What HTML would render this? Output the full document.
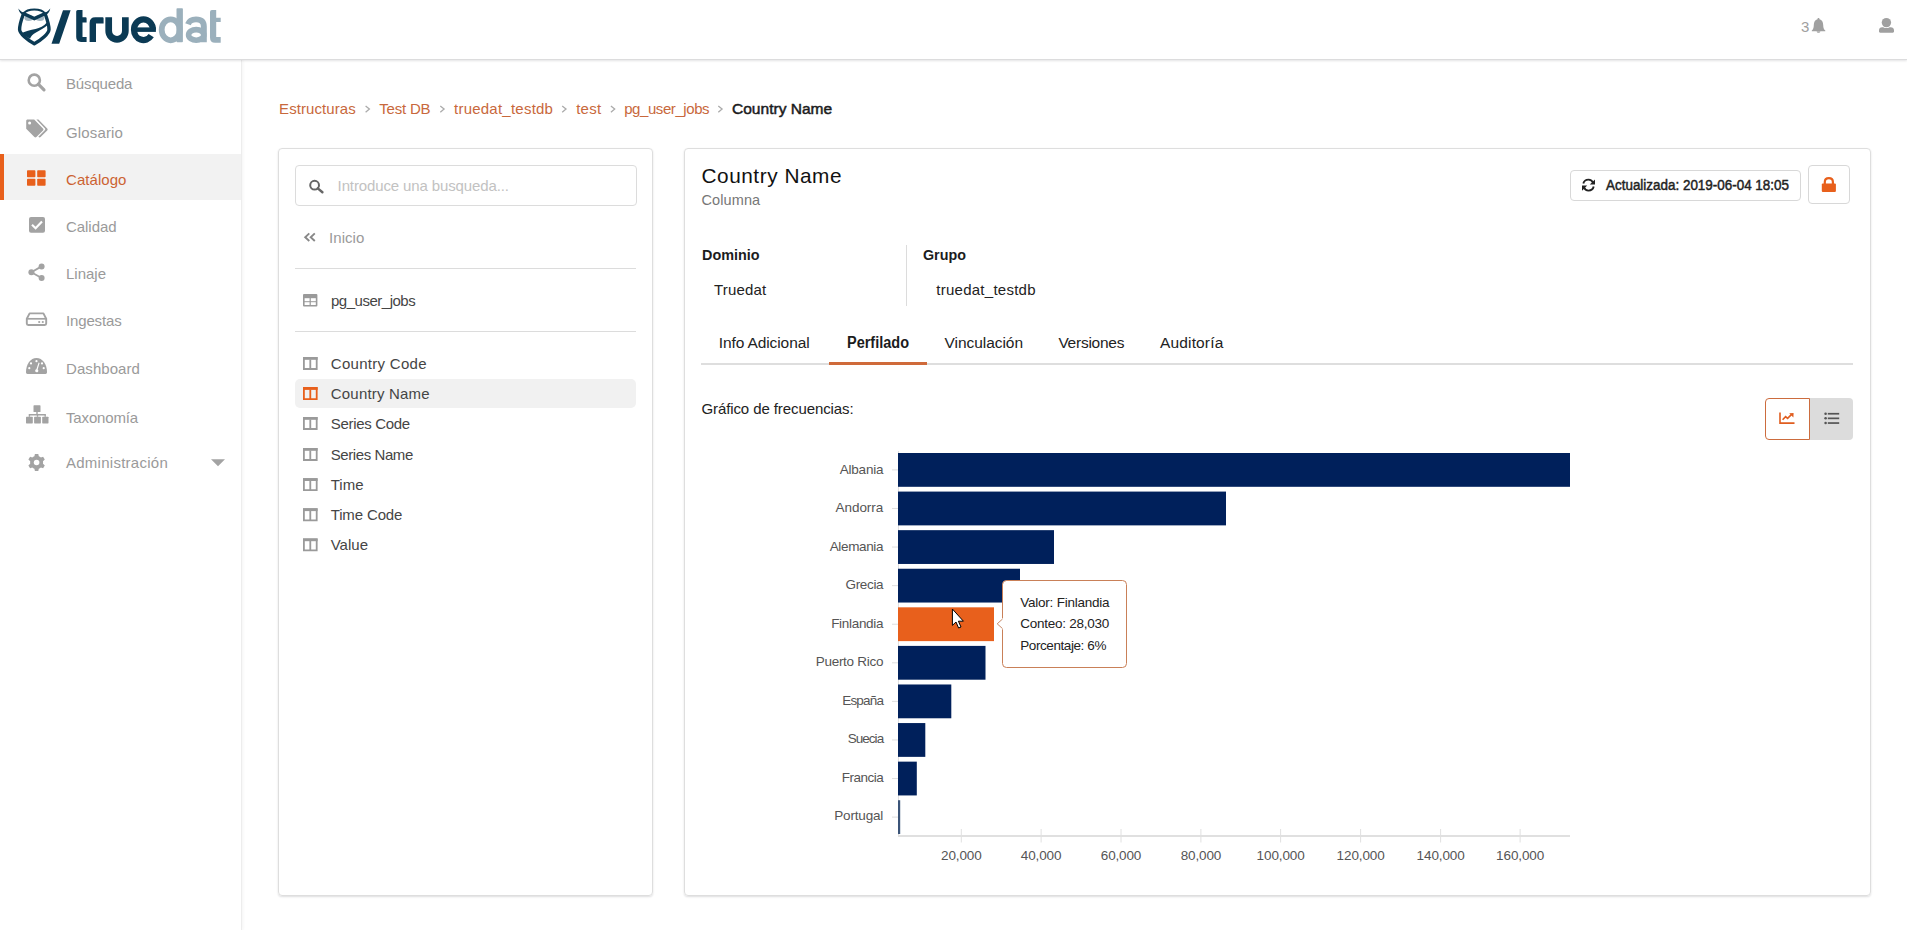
<!DOCTYPE html>
<html><head><meta charset="utf-8">
<style>
html,body{margin:0;padding:0;width:1907px;height:930px;overflow:hidden;background:#fff;font-family:"Liberation Sans",sans-serif;}
.t{position:absolute;white-space:nowrap;line-height:1;}
.a{position:absolute;}
svg.a{overflow:visible;}
</style></head><body>
<!-- sidebar -->
<div class="a" style="left:0;top:60px;width:241px;height:870px;background:#fff;border-right:1px solid #ededed;box-shadow:1px 0 3px rgba(34,36,38,.05);"></div>
<div class="a" style="left:0;top:154px;width:241px;height:46px;background:#f2f2f2;"></div>
<div class="a" style="left:0;top:154px;width:4px;height:46px;background:#e8601c;"></div>
<!-- header -->
<div class="a" style="left:0;top:0;width:1907px;height:59px;background:#fff;border-bottom:1px solid #dcdcdd;box-shadow:0 1px 2px rgba(34,36,38,.12);"></div>
<!-- panels -->
<div class="a" style="left:278px;top:148px;width:373px;height:746px;border:1px solid #dedede;border-radius:4px;box-shadow:0 1px 2px rgba(34,36,38,.15);"></div>
<div class="a" style="left:684px;top:148px;width:1185px;height:746px;border:1px solid #dedede;border-radius:4px;box-shadow:0 1px 2px rgba(34,36,38,.15);"></div>
<!-- input -->
<div class="a" style="left:295px;top:165px;width:340px;height:39px;border:1px solid #dcdcdc;border-radius:4px;"></div>
<!-- dividers -->
<div class="a" style="left:295px;top:268px;width:341px;height:1px;background:#dcdcdc;"></div>
<div class="a" style="left:295px;top:331px;width:341px;height:1px;background:#dcdcdc;"></div>
<!-- active column -->
<div class="a" style="left:295px;top:379px;width:341px;height:29px;background:#f1f1f1;border-radius:5px;"></div>
<!-- buttons -->
<div class="a" style="left:1570px;top:170px;width:229px;height:29px;border:1px solid #d8d8d8;border-radius:4px;"></div>
<div class="a" style="left:1808px;top:165px;width:40px;height:37px;border:1px solid #d8d8d8;border-radius:4px;"></div>
<!-- meta divider -->
<div class="a" style="left:906px;top:245px;width:1px;height:61px;background:#dcdcdc;"></div>
<!-- tabs -->
<div class="a" style="left:701px;top:363px;width:1152px;height:2px;background:#dedede;"></div>
<div class="a" style="left:829px;top:362px;width:98px;height:3px;background:#cf6a3a;"></div>
<!-- toggle -->
<div class="a" style="left:1809px;top:398px;width:44px;height:42px;background:#dcdcdc;border-radius:0 4px 4px 0;"></div>
<div class="a" style="left:1765px;top:398px;width:43px;height:40px;border:1px solid #cc6c3e;border-radius:4px 0 0 4px;background:#fff;"></div>

<!-- ICONS & CHART -->
<svg class="a" style="left:0;top:0" width="1907" height="930" viewBox="0 0 1907 930">
  <!-- logo owl -->
  <g transform="translate(14,4)" fill="#0b3a54">
    <path d="M9.4 10 C7.6 15,5.6 20,5.6 25.5 C5.6 29.5,13.5 36,20.3 39.8 C27.1 36,35 29.5,35 25.5 C35 20,33 15,31.2 10" fill="none" stroke="#0b3a54" stroke-width="3.4" stroke-linejoin="round"/>
    <path d="M9.6 9.6 C13.5 4.2,27.1 4.2,31 9.6" fill="none" stroke="#0b3a54" stroke-width="2"/>
    <path d="M4.3 4.5 C6.3 7.4,8.8 8.6,11.6 8.8 L10 11.8 C7 10.4,5 8,4.3 4.5Z"/>
    <path d="M36.3 4.5 C34.3 7.4,31.8 8.6,29 8.8 L30.6 11.8 C33.6 10.4,35.6 8,36.3 4.5Z"/>
    <ellipse cx="14.7" cy="14" rx="4.3" ry="3" fill="#a4b7c2"/>
    <ellipse cx="26" cy="14" rx="4.3" ry="3" fill="#a4b7c2"/>
    <path d="M8.8 9.2 L20.3 14.6 L31.8 9.2" fill="none" stroke="#0b3a54" stroke-width="3.4" stroke-linejoin="miter"/>
    <path d="M6.5 29.4 C11.5 27.2,16.5 26,21.5 25 C26 24,29.8 22.2,32.8 18.6 L33.4 21.2 C30.2 24,26.2 26,22 28.4 C19 30.2,16.8 32,16 34.8 L12 32.6 C10 31.6,8 30.6,6.5 29.4Z"/>
  </g>
  <path d="M63 10.2 L70.6 10.2 L59.2 43.8 L51.5 43.8Z" fill="#0b3a54"/>
  <g fill="#0b3a54">
    <path d="M76.2 11.5 Q76.2 9.9 77.8 9.9 H82.5 V17.3 H85.6 Q86.6 17.3 86.6 18.3 V22.5 H82.5 V37.1 H86.6 V41.9 H81 Q76.2 41.9 76.2 37 Z"/>
    <path d="M89.6 41.9 V23 Q89.6 17.3 95.3 17.3 H102.6 Q103.6 17.3 103.6 18.3 V23.4 H96 V41.9 Z"/>
  </g>
  <path d="M108.7 17.3 V31.1 A8.32 8.32 0 0 0 125.35 31.1 V17.3" fill="none" stroke="#0b3a54" stroke-width="6.7"/>
  <path d="M152.9 29.65 A9.45 10.35 0 0 0 134 29.65 A9.45 10.35 0 0 0 151.2 35.6" fill="none" stroke="#0b3a54" stroke-width="6.2"/>
  <rect x="134" y="27.4" width="21.9" height="4.5" fill="#0b3a54"/>
  <g fill="#9bb0bc">
    <rect x="176.5" y="8.3" width="6.4" height="34" rx="0.8"/>
    <path d="M210 12 Q210 10.1 211.9 10.1 H216.2 V17.7 H220.7 V22 H216.2 V37.1 H220.7 V42.8 H215 Q210 42.8 210 37.5 Z"/>
  </g>
  <ellipse cx="170.7" cy="29.8" rx="9" ry="10.5" fill="none" stroke="#9bb0bc" stroke-width="5.8"/>
  <path d="M188 24.3 C189.3 20.4,192.3 19.4,196 19.4 C201.3 19.4,203.85 22,203.85 26.5 V42.3" fill="none" stroke="#9bb0bc" stroke-width="5.9"/>
  <ellipse cx="196.2" cy="34.9" rx="7.6" ry="5.3" fill="none" stroke="#9bb0bc" stroke-width="5.6"/>

  <!-- bell -->
  <path d="M1818.5 18 C1819.3 18,1819.6 18.6,1819.5 19.3 C1822 20,1823.2 22,1823.2 25 C1823.2 28,1824 29.5,1825.3 30.5 L1825.3 31.2 L1811.8 31.2 L1811.8 30.5 C1813 29.5,1813.8 28,1813.8 25 C1813.8 22,1815 20,1817.5 19.3 C1817.4 18.6,1817.7 18,1818.5 18Z M1816.6 31.5 C1816.8 32.4,1817.6 32.8,1818.5 32.8 C1819.4 32.8,1820.2 32.4,1820.4 31.5Z" fill="#a0a0a0"/>
  <!-- user -->
  <circle cx="1886.4" cy="22.6" r="4.7" fill="#a0a0a0"/>
  <path d="M1879 30.2 C1879 28.3,1880.3 27.2,1882.2 27.2 L1883.2 27.2 C1884.2 27.9,1885.3 28.1,1886.4 28.1 C1887.5 28.1,1888.6 27.9,1889.6 27.2 L1890.7 27.2 C1892.6 27.2,1894 28.3,1894 30.2 L1894 31.6 C1894 32.3,1893.5 32.8,1892.8 32.8 L1880.2 32.8 C1879.5 32.8,1879 32.3,1879 31.6Z" fill="#a0a0a0"/>

  <!-- sidebar icons -->
  <g fill="#a3a3a3">
    <!-- search -->
    <circle cx="34.3" cy="80.2" r="5.6" fill="none" stroke="#a3a3a3" stroke-width="2.6"/>
    <path d="M38.3 84.2 L44 89.8" stroke="#a3a3a3" stroke-width="3.2" stroke-linecap="round"/>
    <!-- tags -->
    <path d="M26.2 121 C26.2 120.2,26.8 119.6,27.6 119.6 L34.2 119.6 L43 128.4 C43.6 129,43.6 129.8,43 130.4 L36.4 137 C35.8 137.6,35 137.6,34.4 137 L26.2 128.8Z" />
    <circle cx="29.6" cy="123" r="1.5" fill="#fff"/>
    <path d="M36.4 119.6 L38.4 119.6 L47.2 128.4 C47.8 129,47.8 129.8,47.2 130.4 L40.6 137 C40 137.6,39.2 137.6,38.6 137 L38.3 136.7 L45 130 C45.4 129.6,45.4 129,45 128.6Z"/>
    <!-- th-large -->
    <g fill="#e8601c">
      <rect x="27" y="170.3" width="8.4" height="6.9" rx="0.8"/>
      <rect x="37.2" y="170.3" width="8.4" height="6.9" rx="0.8"/>
      <rect x="27" y="178.8" width="8.4" height="6.9" rx="0.8"/>
      <rect x="37.2" y="178.8" width="8.4" height="6.9" rx="0.8"/>
    </g>
    <!-- check-square -->
    <rect x="29" y="217" width="16" height="15.7" rx="2"/>
    <path d="M32 224.8 L35.6 228.2 L42 221.6" fill="none" stroke="#fff" stroke-width="2.2"/>
    <!-- share-alt -->
    <circle cx="41.6" cy="266.4" r="3"/>
    <circle cx="31.4" cy="272.2" r="3"/>
    <circle cx="41.6" cy="278" r="3"/>
    <path d="M41.6 266.4 L31.4 272.2 L41.6 278" fill="none" stroke="#a3a3a3" stroke-width="1.8"/>
    <!-- hdd -->
    <path d="M29.6 313.4 L43.4 313.4 L46.2 318.8 L46.2 323.6 C46.2 324.4,45.6 325,44.8 325 L28.2 325 C27.4 325,26.8 324.4,26.8 323.6 L26.8 318.8Z" fill="none" stroke="#a3a3a3" stroke-width="1.9" stroke-linejoin="round"/>
    <path d="M26.8 318.8 L46.2 318.8" stroke="#a3a3a3" stroke-width="1.7"/>
    <circle cx="42.8" cy="322" r="1.1"/><circle cx="39.2" cy="322" r="1.1"/>
    <!-- tachometer -->
    <path d="M26 372.2 C26 364.2,30.5 358,36.5 358 C42.5 358,47 364.2,47 372.2 C47 373.2,46.4 373.9,45.5 373.9 L27.5 373.9 C26.6 373.9,26 373.2,26 372.2Z"/>
    <g fill="#fff">
      <circle cx="29.3" cy="368.2" r="1.1"/><circle cx="31" cy="363.4" r="1.1"/><circle cx="36.5" cy="361.2" r="1.1"/><circle cx="42" cy="363.4" r="1.1"/><circle cx="43.7" cy="368.2" r="1.1"/>
      <path d="M38.6 362.6 L39.6 362.9 L37.6 369.5 C38.4 370,38.6 371,38 371.8 C37.3 372.6,35.8 372.5,35.3 371.5 C34.9 370.6,35.4 369.6,36.4 369.3Z"/>
    </g>
    <!-- sitemap -->
    <rect x="33.5" y="405.3" width="7" height="6.7" rx="0.6"/>
    <path d="M37 412 L37 414.7 M29.4 416.8 L29.4 414.7 L45.2 414.7 L45.2 416.8 M37.5 414.7 L37.5 416.8" fill="none" stroke="#a3a3a3" stroke-width="1.4"/>
    <rect x="26" y="416.7" width="6.8" height="6.7" rx="0.6"/>
    <rect x="34.1" y="416.7" width="6.8" height="6.7" rx="0.6"/>
    <rect x="42.2" y="416.7" width="6.3" height="6.7" rx="0.6"/>
    <!-- cog -->
    <g transform="translate(36.6,462.5)">
      <path d="M-1.7 -8.5 L1.7 -8.5 L2.2 -6.2 C3 -5.9,3.7 -5.5,4.3 -5 L6.5 -5.8 L8.2 -2.9 L6.4 -1.3 C6.5 -0.4,6.5 0.4,6.4 1.3 L8.2 2.9 L6.5 5.8 L4.3 5 C3.7 5.5,3 5.9,2.2 6.2 L1.7 8.5 L-1.7 8.5 L-2.2 6.2 C-3 5.9,-3.7 5.5,-4.3 5 L-6.5 5.8 L-8.2 2.9 L-6.4 1.3 C-6.5 0.4,-6.5 -0.4,-6.4 -1.3 L-8.2 -2.9 L-6.5 -5.8 L-4.3 -5 C-3.7 -5.5,-3 -5.9,-2.2 -6.2Z"/>
      <circle r="2.8" fill="#fff"/>
    </g>
    <!-- caret -->
    <path d="M211 459.2 L225 459.2 L218 466.3Z"/>
  </g>

  <!-- breadcrumb chevrons -->
  <g fill="none" stroke="#ababab" stroke-width="1.3">
    <path d="M365.6 105.9 L369.4 109.1 L365.6 112.3"/>
    <path d="M440.3 105.9 L444.1 109.1 L440.3 112.3"/>
    <path d="M562.2 105.9 L566 109.1 L562.2 112.3"/>
    <path d="M610.9 105.9 L614.7 109.1 L610.9 112.3"/>
    <path d="M718.3 105.9 L722.1 109.1 L718.3 112.3"/>
  </g>

  <!-- input search icon -->
  <circle cx="314.6" cy="185.2" r="4.4" fill="none" stroke="#666" stroke-width="2"/>
  <path d="M317.8 188.4 L322.4 192.2" stroke="#666" stroke-width="2.5" stroke-linecap="round"/>
  <!-- angle double left -->
  <path d="M309.3 233.4 L305.2 237.2 L309.3 241 M314.8 233.4 L310.7 237.2 L314.8 241" fill="none" stroke="#888" stroke-width="1.9"/>
  <!-- table icon -->
  <g>
    <rect x="303" y="294" width="14.4" height="12.4" rx="1" fill="#9a9a9a"/>
    <rect x="304.6" y="298.2" width="5" height="3" fill="#fff"/>
    <rect x="310.8" y="298.2" width="5" height="3" fill="#fff"/>
    <rect x="304.6" y="302.2" width="5" height="2.8" fill="#fff"/>
    <rect x="310.8" y="302.2" width="5" height="2.8" fill="#fff"/>
  </g>
  <!-- column icons -->
  <g id="colicons"></g>
  <g transform="translate(303,357)"><path d="M0.9 0.9 H13.7 V12 H0.9Z M7.3 2.5 V12" fill="none" stroke="#9a9a9a" stroke-width="1.8"/><rect x="0" y="0" width="14.6" height="2.8" fill="#9a9a9a"/></g>
<g transform="translate(303,387.1)"><path d="M0.9 0.9 H13.7 V12 H0.9Z M7.3 2.5 V12" fill="none" stroke="#e8601c" stroke-width="1.8"/><rect x="0" y="0" width="14.6" height="2.8" fill="#e8601c"/></g>
<g transform="translate(303,417)"><path d="M0.9 0.9 H13.7 V12 H0.9Z M7.3 2.5 V12" fill="none" stroke="#9a9a9a" stroke-width="1.8"/><rect x="0" y="0" width="14.6" height="2.8" fill="#9a9a9a"/></g>
<g transform="translate(303,448)"><path d="M0.9 0.9 H13.7 V12 H0.9Z M7.3 2.5 V12" fill="none" stroke="#9a9a9a" stroke-width="1.8"/><rect x="0" y="0" width="14.6" height="2.8" fill="#9a9a9a"/></g>
<g transform="translate(303,478.2)"><path d="M0.9 0.9 H13.7 V12 H0.9Z M7.3 2.5 V12" fill="none" stroke="#9a9a9a" stroke-width="1.8"/><rect x="0" y="0" width="14.6" height="2.8" fill="#9a9a9a"/></g>
<g transform="translate(303,508.3)"><path d="M0.9 0.9 H13.7 V12 H0.9Z M7.3 2.5 V12" fill="none" stroke="#9a9a9a" stroke-width="1.8"/><rect x="0" y="0" width="14.6" height="2.8" fill="#9a9a9a"/></g>
<g transform="translate(303,538.4)"><path d="M0.9 0.9 H13.7 V12 H0.9Z M7.3 2.5 V12" fill="none" stroke="#9a9a9a" stroke-width="1.8"/><rect x="0" y="0" width="14.6" height="2.8" fill="#9a9a9a"/></g>

  <!-- refresh icon -->
  <g fill="none" stroke="#222" stroke-width="1.9">
    <path d="M1593.2 183 C1592.3 180.8,1590.5 179.6,1588.5 179.6 C1586 179.6,1583.9 181.2,1583.3 183.6"/>
    <path d="M1583.8 187.2 C1584.7 189.4,1586.5 190.6,1588.5 190.6 C1591 190.6,1593.1 189,1593.7 186.6"/>
  </g>
  <path d="M1595 179.4 L1595 184.6 L1589.8 184.6Z" fill="#222"/>
  <path d="M1582 190.8 L1582 185.6 L1587.2 185.6Z" fill="#222"/>
  <!-- lock -->
  <path d="M1824.8 184 L1824.8 182 C1824.8 179.5,1826.5 178.1,1828.85 178.1 C1831.2 178.1,1832.9 179.5,1832.9 182 L1832.9 184" fill="none" stroke="#e8601c" stroke-width="2.2"/>
  <rect x="1821.8" y="183.4" width="14.1" height="8.6" rx="1" fill="#e8601c"/>

  <!-- chart icon -->
  <g fill="none" stroke="#e05d1f" stroke-width="1.6">
    <path d="M1780 412.6 L1780 423.1 L1794.5 423.1"/>
    <path d="M1782.6 419.8 L1785.6 416.6 L1787.6 418.4 L1791.6 414.4"/>
  </g>
  <path d="M1789.2 413.2 L1793.6 413 L1793.4 417.4Z" fill="#e05d1f"/>
  <!-- list icon -->
  <g fill="#555">
    <circle cx="1825.6" cy="413.7" r="1.3"/><circle cx="1825.6" cy="418.3" r="1.3"/><circle cx="1825.6" cy="423" r="1.3"/>
    <rect x="1827.8" y="412.9" width="11.4" height="1.7"/>
    <rect x="1827.8" y="417.5" width="11.4" height="1.7"/>
    <rect x="1827.8" y="422.2" width="11.4" height="1.7"/>
  </g>

  <!-- chart -->
  <g stroke="#dedede" stroke-width="1">
    <line x1="892" y1="469.90" x2="898" y2="469.90"/>
<line x1="892" y1="508.48" x2="898" y2="508.48"/>
<line x1="892" y1="547.06" x2="898" y2="547.06"/>
<line x1="892" y1="585.64" x2="898" y2="585.64"/>
<line x1="892" y1="624.22" x2="898" y2="624.22"/>
<line x1="892" y1="662.80" x2="898" y2="662.80"/>
<line x1="892" y1="701.38" x2="898" y2="701.38"/>
<line x1="892" y1="739.96" x2="898" y2="739.96"/>
<line x1="892" y1="778.54" x2="898" y2="778.54"/>
<line x1="892" y1="817.12" x2="898" y2="817.12"/>
  </g>
  <line x1="898.5" y1="451" x2="898.5" y2="836" stroke="#e0e0e0" stroke-width="1"/>
  <rect x="898" y="453.00" width="672.00" height="33.8" fill="#00205b"/>
<rect x="898" y="491.58" width="328.00" height="33.8" fill="#00205b"/>
<rect x="898" y="530.16" width="156.00" height="33.8" fill="#00205b"/>
<rect x="898" y="568.74" width="122.00" height="33.8" fill="#00205b"/>
<rect x="898" y="607.32" width="96.00" height="33.8" fill="#e8601c"/>
<rect x="898" y="645.90" width="87.50" height="33.8" fill="#00205b"/>
<rect x="898" y="684.48" width="53.30" height="33.8" fill="#00205b"/>
<rect x="898" y="723.06" width="27.30" height="33.8" fill="#00205b"/>
<rect x="898" y="761.64" width="18.80" height="33.8" fill="#00205b"/>
<rect x="898" y="800.22" width="2.20" height="33.8" fill="#3b5478"/>
  <rect x="898" y="835" width="672" height="2" fill="#e0e0e0"/>
  <g stroke="#e0e0e0" stroke-width="1">
    <line x1="961.3" y1="829" x2="961.3" y2="842.5"/>
<line x1="1041.1" y1="829" x2="1041.1" y2="842.5"/>
<line x1="1121.0" y1="829" x2="1121.0" y2="842.5"/>
<line x1="1200.9" y1="829" x2="1200.9" y2="842.5"/>
<line x1="1280.6" y1="829" x2="1280.6" y2="842.5"/>
<line x1="1360.6" y1="829" x2="1360.6" y2="842.5"/>
<line x1="1440.6" y1="829" x2="1440.6" y2="842.5"/>
<line x1="1520.1" y1="829" x2="1520.1" y2="842.5"/>
  </g>

  <!-- tooltip -->
  <rect x="1002.5" y="580.5" width="124" height="87" rx="4" fill="#fff" stroke="#c98058" stroke-width="1"/>
  <path d="M1003 618.6 L997.2 623.8 L1003 629" fill="#fff" stroke="#c98a68" stroke-width="1"/>
  <rect x="1002.5" y="618" width="1.2" height="11.6" fill="#fff"/>
  <!-- cursor -->
  <path d="M952.4 609 L952.4 625.4 L956 622 L958.6 628 L961 627 L958.4 621.2 L963.4 621.2Z" fill="#fff" stroke="#000" stroke-width="1" stroke-linejoin="round"/>
</svg>
<div class="t" style="left:66.00px;top:76.30px;font-size:15px;letter-spacing:-0.157px;color:#9a9a9a;">Búsqueda</div>
<div class="t" style="left:66.00px;top:125.10px;font-size:15px;letter-spacing:0.143px;color:#9a9a9a;">Glosario</div>
<div class="t" style="left:66.00px;top:172.10px;font-size:15px;letter-spacing:0.057px;color:#cc6333;">Catálogo</div>
<div class="t" style="left:66.00px;top:219.10px;font-size:15px;letter-spacing:-0.052px;color:#9a9a9a;">Calidad</div>
<div class="t" style="left:66.00px;top:266.20px;font-size:15px;letter-spacing:-0.006px;color:#9a9a9a;">Linaje</div>
<div class="t" style="left:66.00px;top:313.30px;font-size:15px;letter-spacing:-0.151px;color:#9a9a9a;">Ingestas</div>
<div class="t" style="left:66.00px;top:361.10px;font-size:15px;letter-spacing:0.069px;color:#9a9a9a;">Dashboard</div>
<div class="t" style="left:66.00px;top:410.20px;font-size:15px;letter-spacing:-0.153px;color:#9a9a9a;">Taxonomía</div>
<div class="t" style="left:66.00px;top:454.90px;font-size:15px;letter-spacing:0.259px;color:#9a9a9a;">Administración</div>
<div class="t" style="left:1801.00px;top:19.10px;font-size:15px;letter-spacing:-0.642px;color:#a0a0a0;">3</div>
<div class="t" style="left:279.10px;top:101.20px;font-size:15px;letter-spacing:0.068px;color:#c8683c;">Estructuras</div>
<div class="t" style="left:379.30px;top:101.20px;font-size:15px;letter-spacing:-0.202px;color:#c8683c;">Test DB</div>
<div class="t" style="left:454.00px;top:101.20px;font-size:15px;letter-spacing:0.235px;color:#c8683c;">truedat_testdb</div>
<div class="t" style="left:576.20px;top:101.20px;font-size:15px;letter-spacing:0.256px;color:#c8683c;">test</div>
<div class="t" style="left:624.20px;top:101.20px;font-size:15px;letter-spacing:-0.422px;color:#c8683c;">pg_user_jobs</div>
<div class="t" style="left:732.40px;top:100.78px;font-size:15.5px;letter-spacing:0.000px;color:#1b1c1d;-webkit-text-stroke:0.5px #1b1c1d;transform:scaleX(1.0028);transform-origin:0 0;">Country Name</div>
<div class="t" style="left:337.60px;top:178.30px;font-size:15px;letter-spacing:-0.124px;color:#c2c2c2;">Introduce una busqueda...</div>
<div class="t" style="left:329.00px;top:229.90px;font-size:15px;letter-spacing:0.064px;color:#9a9a9a;">Inicio</div>
<div class="t" style="left:331.00px;top:292.80px;font-size:15px;letter-spacing:-0.489px;color:#454545;">pg_user_jobs</div>
<div class="t" style="left:330.80px;top:356.30px;font-size:15px;letter-spacing:0.288px;color:#454545;">Country Code</div>
<div class="t" style="left:330.80px;top:386.10px;font-size:15px;letter-spacing:0.192px;color:#454545;">Country Name</div>
<div class="t" style="left:330.80px;top:416.00px;font-size:15px;letter-spacing:-0.322px;color:#454545;">Series Code</div>
<div class="t" style="left:330.80px;top:447.00px;font-size:15px;letter-spacing:-0.427px;color:#454545;">Series Name</div>
<div class="t" style="left:330.70px;top:477.10px;font-size:15px;letter-spacing:0.031px;color:#454545;">Time</div>
<div class="t" style="left:330.70px;top:507.20px;font-size:15px;letter-spacing:-0.134px;color:#454545;">Time Code</div>
<div class="t" style="left:330.70px;top:537.20px;font-size:15px;letter-spacing:0.010px;color:#454545;">Value</div>
<div class="t" style="left:701.50px;top:165.89px;font-size:20.8px;letter-spacing:0.536px;color:#111;">Country Name</div>
<div class="t" style="left:701.50px;top:192.53px;font-size:14.5px;letter-spacing:0.096px;color:#777;">Columna</div>
<div class="t" style="left:1605.50px;top:178.15px;font-size:14px;letter-spacing:0.000px;color:#222;-webkit-text-stroke:0.45px #222;transform:scaleX(0.9596);transform-origin:0 0;">Actualizada: 2019-06-04 18:05</div>
<div class="t" style="left:701.60px;top:246.78px;font-size:15.5px;letter-spacing:0.000px;color:#1b1c1d;font-weight:bold;transform:scaleX(0.9291);transform-origin:0 0;">Dominio</div>
<div class="t" style="left:713.90px;top:282.30px;font-size:15px;letter-spacing:0.195px;color:#222;">Truedat</div>
<div class="t" style="left:923.00px;top:246.78px;font-size:15.5px;letter-spacing:0.000px;color:#1b1c1d;font-weight:bold;transform:scaleX(0.9227);transform-origin:0 0;">Grupo</div>
<div class="t" style="left:936.30px;top:282.30px;font-size:15px;letter-spacing:0.257px;color:#222;">truedat_testdb</div>
<div class="t" style="left:718.70px;top:335.18px;font-size:15.5px;letter-spacing:-0.097px;color:#222;">Info Adicional</div>
<div class="t" style="left:847.00px;top:335.26px;font-size:16px;letter-spacing:0.000px;color:#1b1c1d;font-weight:bold;transform:scaleX(0.9056);transform-origin:0 0;">Perfilado</div>
<div class="t" style="left:944.50px;top:335.18px;font-size:15.5px;letter-spacing:-0.045px;color:#222;">Vinculación</div>
<div class="t" style="left:1058.40px;top:335.18px;font-size:15.5px;letter-spacing:-0.252px;color:#222;">Versiones</div>
<div class="t" style="left:1160.00px;top:335.18px;font-size:15.5px;letter-spacing:0.151px;color:#222;">Auditoría</div>
<div class="t" style="left:701.40px;top:401.00px;font-size:15px;letter-spacing:-0.089px;color:#222;">Gráfico de frecuencias:</div>
<div class="t" style="left:839.80px;top:462.57px;font-size:13.5px;letter-spacing:-0.234px;color:#555;">Albania</div>
<div class="t" style="left:835.50px;top:501.07px;font-size:13.5px;letter-spacing:-0.047px;color:#555;">Andorra</div>
<div class="t" style="left:829.70px;top:539.57px;font-size:13.5px;letter-spacing:-0.348px;color:#555;">Alemania</div>
<div class="t" style="left:845.60px;top:578.07px;font-size:13.5px;letter-spacing:-0.360px;color:#555;">Grecia</div>
<div class="t" style="left:831.20px;top:616.57px;font-size:13.5px;letter-spacing:-0.309px;color:#555;">Finlandia</div>
<div class="t" style="left:815.70px;top:655.07px;font-size:13.5px;letter-spacing:-0.276px;color:#555;">Puerto Rico</div>
<div class="t" style="left:842.20px;top:693.57px;font-size:13.5px;letter-spacing:-0.798px;color:#555;">España</div>
<div class="t" style="left:847.70px;top:732.07px;font-size:13.5px;letter-spacing:-0.963px;color:#555;">Suecia</div>
<div class="t" style="left:841.70px;top:770.57px;font-size:13.5px;letter-spacing:-0.502px;color:#555;">Francia</div>
<div class="t" style="left:834.20px;top:809.07px;font-size:13.5px;letter-spacing:-0.160px;color:#555;">Portugal</div>
<div class="t" style="left:941.05px;top:849.47px;font-size:13.5px;letter-spacing:-0.132px;color:#555;">20,000</div>
<div class="t" style="left:1020.85px;top:849.47px;font-size:13.5px;letter-spacing:-0.132px;color:#555;">40,000</div>
<div class="t" style="left:1100.75px;top:849.47px;font-size:13.5px;letter-spacing:-0.132px;color:#555;">60,000</div>
<div class="t" style="left:1180.65px;top:849.47px;font-size:13.5px;letter-spacing:-0.132px;color:#555;">80,000</div>
<div class="t" style="left:1256.60px;top:849.47px;font-size:13.5px;letter-spacing:-0.114px;color:#555;">100,000</div>
<div class="t" style="left:1336.60px;top:849.47px;font-size:13.5px;letter-spacing:-0.114px;color:#555;">120,000</div>
<div class="t" style="left:1416.60px;top:849.47px;font-size:13.5px;letter-spacing:-0.114px;color:#555;">140,000</div>
<div class="t" style="left:1496.10px;top:849.47px;font-size:13.5px;letter-spacing:-0.114px;color:#555;">160,000</div>
<div class="t" style="left:1020.20px;top:596.37px;font-size:13.5px;letter-spacing:-0.225px;color:#222;">Valor: Finlandia</div>
<div class="t" style="left:1020.20px;top:617.07px;font-size:13.5px;letter-spacing:-0.252px;color:#222;">Conteo: 28,030</div>
<div class="t" style="left:1020.20px;top:639.27px;font-size:13.5px;letter-spacing:-0.411px;color:#222;">Porcentaje: 6%</div>
</body></html>
